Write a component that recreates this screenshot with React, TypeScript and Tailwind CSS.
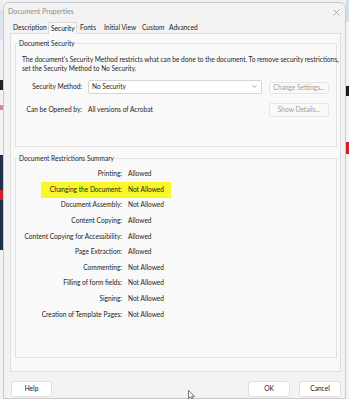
import React from "react";

const rows: [string, string][] = [
  ["Printing:", "Allowed"],
  ["Changing the Document:", "Not Allowed"],
  ["Document Assembly:", "Not Allowed"],
  ["Content Copying:", "Allowed"],
  ["Content Copying for Accessibility:", "Allowed"],
  ["Page Extraction:", "Allowed"],
  ["Commenting:", "Not Allowed"],
  ["Filling of form fields:", "Not Allowed"],
  ["Signing:", "Not Allowed"],
  ["Creation of Template Pages:", "Not Allowed"],
];

const tabs: { name: string; w: string; sel?: boolean }[] = [
  { name: "Description", w: "w-[38px]" },
  { name: "Security", w: "w-[29px]", sel: true },
  { name: "Fonts", w: "w-[24px]" },
  { name: "Initial View", w: "w-[38px]" },
  { name: "Custom", w: "w-[27px]" },
  { name: "Advanced", w: "w-[33px]" },
];

export default function App() {
  return (
    <div
      className="w-[349px] h-[399px] flex overflow-hidden bg-[#eef0f3] text-[6.6px] text-[#1e1e1e] relative whitespace-nowrap"
      style={{ fontFamily: "Lato, 'Liberation Sans', sans-serif" }}
    >
      {/* left background strip */}
      <div className="w-[3px] flex flex-col shrink-0">
        <div className="h-[10px] bg-[#eeeeee]" />
        <div className="h-[30px] bg-[#dce5ef]" />
        <div className="h-[40px] bg-[#eef1f4]" />
        <div className="h-[10px] bg-[#222]" />
        <div className="h-[15px] bg-[#f2f2f2]" />
        <div className="h-[5px] bg-[#e37ab8]" />
        <div className="h-[45px] bg-[#f4f4f4]" />
        <div className="h-[35px] bg-[#1d2f4b]" />
        <div className="h-[10px] bg-[#d0202a]" />
        <div className="h-[50px] bg-[#1d2f4b]" />
        <div className="flex-1 bg-[#f2f2f2]" />
      </div>

      {/* dialog */}
      <div className="w-[343px] h-[397px] mt-[2px] shrink-0 bg-[#f3f3f3] border border-[#c9c9c9] rounded-t-[6px] flex flex-col">
        {/* title bar */}
        <div className="h-[17px] flex items-center justify-between pl-[4px] pr-[5px] shrink-0">
          <span className="text-[7px] text-[#8c8c8c]">Document Properties</span>
          <svg width="7" height="7" viewBox="0 0 7 7" className="mt-[2px]">
            <path d="M0.5 0.5 L6.5 6.5 M6.5 0.5 L0.5 6.5" stroke="#9a9a9a" strokeWidth="0.8" />
          </svg>
        </div>

        {/* tabs */}
        <div className="h-[13px] flex items-end pl-[6px] shrink-0">
          {tabs.map((t) =>
            t.sel ? (
              <div
                key={t.name}
                className={`${t.w} h-[12px] -mb-px bg-[#f9f9f9] border border-b-0 border-[#dcdcdc] pl-[2px] flex items-center text-[#111] relative z-10`}
              >
                {t.name}
              </div>
            ) : (
              <div
                key={t.name}
                className={`${t.w} h-[10px] bg-[#f3f3f3] pl-[3px] flex items-center text-[#222]`}
              >
                {t.name}
              </div>
            )
          )}
        </div>

        {/* panel */}
        <div className="ml-[6px] mr-[4px] h-[339px] shrink-0 bg-[#f9f9f9] border border-[#dedede] pt-[9px] pl-[4px] pr-[3px] flex flex-col">
          {/* Document Security */}
          <div className="relative h-[104px] border border-[#e2e2e2] shrink-0 pl-[6px] pt-[11px]">
            <span className="absolute left-[2px] top-[-5px] bg-[#f9f9f9] px-[1px] leading-[9px] text-[#222]">
              Document Security
            </span>
            <p className="leading-[8.5px]">
              The document's Security Method restricts what can be done to the document. To remove security restrictions,
              <br />
              set the Security Method to No Security.
            </p>
            <div className="flex items-center mt-[7px] -ml-[6px]">
              <div className="w-[66px] text-right text-[#222]">Security Method:</div>
              <div className="ml-[6px] w-[174px] h-[14px] bg-white border border-[#d6d6d6] rounded-[2px] flex items-center justify-between pl-[3px] pr-[4px]">
                <span>No Security</span>
                <svg width="5" height="3" viewBox="0 0 5 3">
                  <path d="M0.3 0.3 L2.5 2.5 L4.7 0.3" stroke="#8a8a8a" strokeWidth="0.7" fill="none" />
                </svg>
              </div>
              <div className="ml-[7px] w-[60px] h-[12px] mt-[3px] border border-[#e6e6e6] rounded-[2px] bg-[#f9f9f9] flex items-center justify-center text-[#a0a0a0]">
                Change Settings...
              </div>
            </div>
            <div className="flex items-center mt-[9px] -ml-[6px] h-[14px]">
              <div className="w-[66px] text-right text-[#222]">Can be Opened by:</div>
              <div className="ml-[6px] w-[174px]">All versions of Acrobat</div>
              <div className="ml-[7px] w-[60px] h-[14px] border border-[#e6e6e6] rounded-[2px] bg-[#f9f9f9] flex items-center justify-center text-[#a0a0a0]">
                Show Details...
              </div>
            </div>
          </div>

          {/* Document Restrictions Summary */}
          <div className="relative mt-[11px] h-[200px] border border-[#e2e2e2] shrink-0 pt-[7px]">
            <span className="absolute left-[2px] top-[-5px] bg-[#f9f9f9] px-[1px] leading-[9px] text-[#222]">
              Document Restrictions Summary
            </span>
            {rows.map(([label, value], i) => (
              <div key={label} className="relative h-[15.67px] flex items-center">
                {i === 1 && (
                  <div className="absolute left-[25px] w-[130px] top-[0.5px] h-[16px] bg-[#f7f72a]" />
                )}
                <div className="relative w-[106px] text-right text-[#222]">{label}</div>
                <div className="relative ml-[6px]">{value}</div>
              </div>
            ))}
          </div>
        </div>

        {/* buttons */}
        <div className="flex pt-[9px] pl-[7px] pr-[4px]">
          <div className="w-[41px] h-[16px] bg-white border border-[#e0e0e0] rounded-[3px] flex items-center justify-center text-[#111]">
            Help
          </div>
          <div className="flex-1" />
          <div className="w-[42px] h-[16px] bg-white border border-[#e0e0e0] rounded-[3px] flex items-center justify-center text-[#111]">
            OK
          </div>
          <div className="ml-[9px] w-[42px] h-[16px] bg-white border border-[#e0e0e0] rounded-[3px] flex items-center justify-center text-[#111]">
            Cancel
          </div>
        </div>
      </div>

      {/* right background strip */}
      <div className="w-[3px] flex flex-col shrink-0">
        <div className="h-[22px] bg-[#d5dfea]" />
        <div className="h-[64px] bg-[#f4f4f4]" />
        <div className="h-[10px] bg-[#1c1c1c]" />
        <div className="h-[46px] bg-[#f4f4f4]" />
        <div className="h-[12px] bg-[#d0202a]" />
        <div className="flex-1 bg-[#f4f4f4]" />
      </div>

      {/* mouse cursor */}
      <svg className="absolute left-[188px] top-[390px]" width="7" height="10" viewBox="0 0 7 10">
        <path d="M0.5 0.5 L0.5 8.5 L2.5 6.8 L4 9.5 L5.2 9 L3.8 6.3 L6.5 6.3 Z" fill="#fff" stroke="#222" strokeWidth="0.6" />
      </svg>
    </div>
  );
}
